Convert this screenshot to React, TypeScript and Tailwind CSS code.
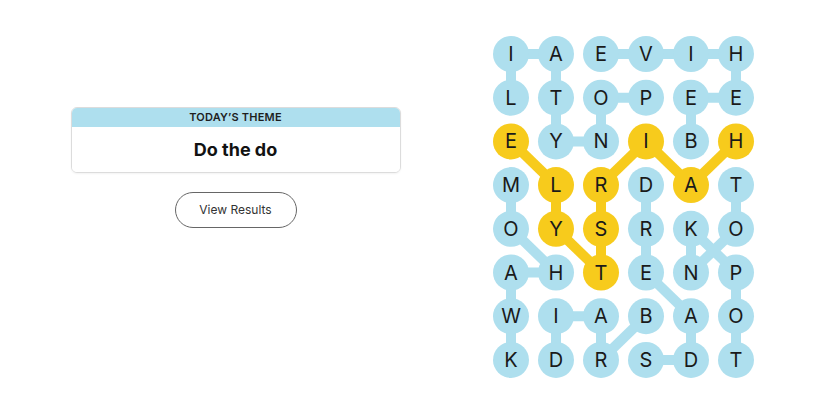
import React from 'react';

const BLUE = '#aedfee';
const YELLOW = '#f7cb1c';

const grid = [
  'IAEVIH',
  'LTOPEE',
  'EYNIBH',
  'MLRDAT',
  'OYSRKO',
  'AHTENP',
  'WIABAO',
  'KDRSDT'
];

// each word is a path of [row, col]
const words: { path: [number, number][]; spangram?: boolean }[] = [
  { path: [[1, 3], [1, 2], [2, 2], [2, 1], [1, 1], [0, 1], [0, 0], [1, 0]] },
  { path: [[2, 4], [1, 4], [1, 5], [0, 5], [0, 4], [0, 3], [0, 2]] },
  { path: [[3, 0], [4, 0], [5, 1], [5, 0], [6, 0], [7, 0]] },
  { path: [[3, 3], [4, 3], [5, 3], [6, 4], [7, 4], [7, 3]] },
  { path: [[7, 5], [6, 5], [5, 5], [4, 4], [5, 4], [4, 5], [3, 5]] },
  { path: [[6, 3], [7, 2], [6, 2], [6, 1], [7, 1]] },
  {
    path: [[2, 5], [3, 4], [2, 3], [3, 2], [4, 2], [5, 2], [4, 1], [3, 1], [2, 0]],
    spangram: true
  }
];

const cx = (c: number) => 18 + c * 45;
const cy = (r: number) => 18 + r * 43.7;

const Board: React.FC = () => {
  const colorAt: Record<string, string> = {};
  words.forEach((w) =>
    w.path.forEach(([r, c]) => {
      colorAt[`${r}-${c}`] = w.spangram ? YELLOW : BLUE;
    })
  );

  return (
    <svg width={262} height={344} viewBox="0 0 262 344">
      {words.map((w, i) =>
        w.path.slice(1).map(([r, c], j) => {
          const [pr, pc] = w.path[j];
          return (
            <line
              key={`${i}-${j}`}
              x1={cx(pc)}
              y1={cy(pr)}
              x2={cx(c)}
              y2={cy(r)}
              stroke={w.spangram ? YELLOW : BLUE}
              strokeWidth={10}
            />
          );
        })
      )}
      {grid.map((row, r) =>
        row.split('').map((ch, c) => (
          <g key={`${r}-${c}`}>
            <circle cx={cx(c)} cy={cy(r)} r={18} fill={colorAt[`${r}-${c}`] || BLUE} />
            <text
              x={cx(c)}
              y={cy(r) + 7}
              textAnchor="middle"
              fontSize={20}
              fill="#1a1a1a"
              style={{ fontFamily: 'Inter, "Liberation Sans", sans-serif' }}
            >
              {ch}
            </text>
          </g>
        ))
      )}
    </svg>
  );
};

export default function App() {
  return (
    <div className="w-[825px] h-[413px] bg-white flex font-['Liberation_Sans',Arial,sans-serif] text-[#121212]">
      <div className="w-[471px] flex flex-col items-center pt-[107px]">
        <div className="w-[330px] rounded-md border border-[#dcdcdc] overflow-hidden shadow-[0_1px_2px_rgba(0,0,0,0.05)]">
          <div className="h-[19px] bg-[#aedfee] flex items-center justify-center text-[11px] font-semibold tracking-[0.2px] text-[#1e1e1e] font-['Inter',sans-serif]">
            TODAY&rsquo;S THEME
          </div>
          <div className="h-[45px] bg-white flex items-center justify-center text-[18px] font-bold font-['Inter',sans-serif]">
            Do the do
          </div>
        </div>
        <button className="mt-[19px] w-[122px] h-[36px] rounded-full border border-[#666] bg-white text-[12px] text-[#333] font-['Inter',sans-serif]">
          View Results
        </button>
      </div>
      <div className="pt-[36px] pl-[22px]">
        <Board />
      </div>
    </div>
  );
}
